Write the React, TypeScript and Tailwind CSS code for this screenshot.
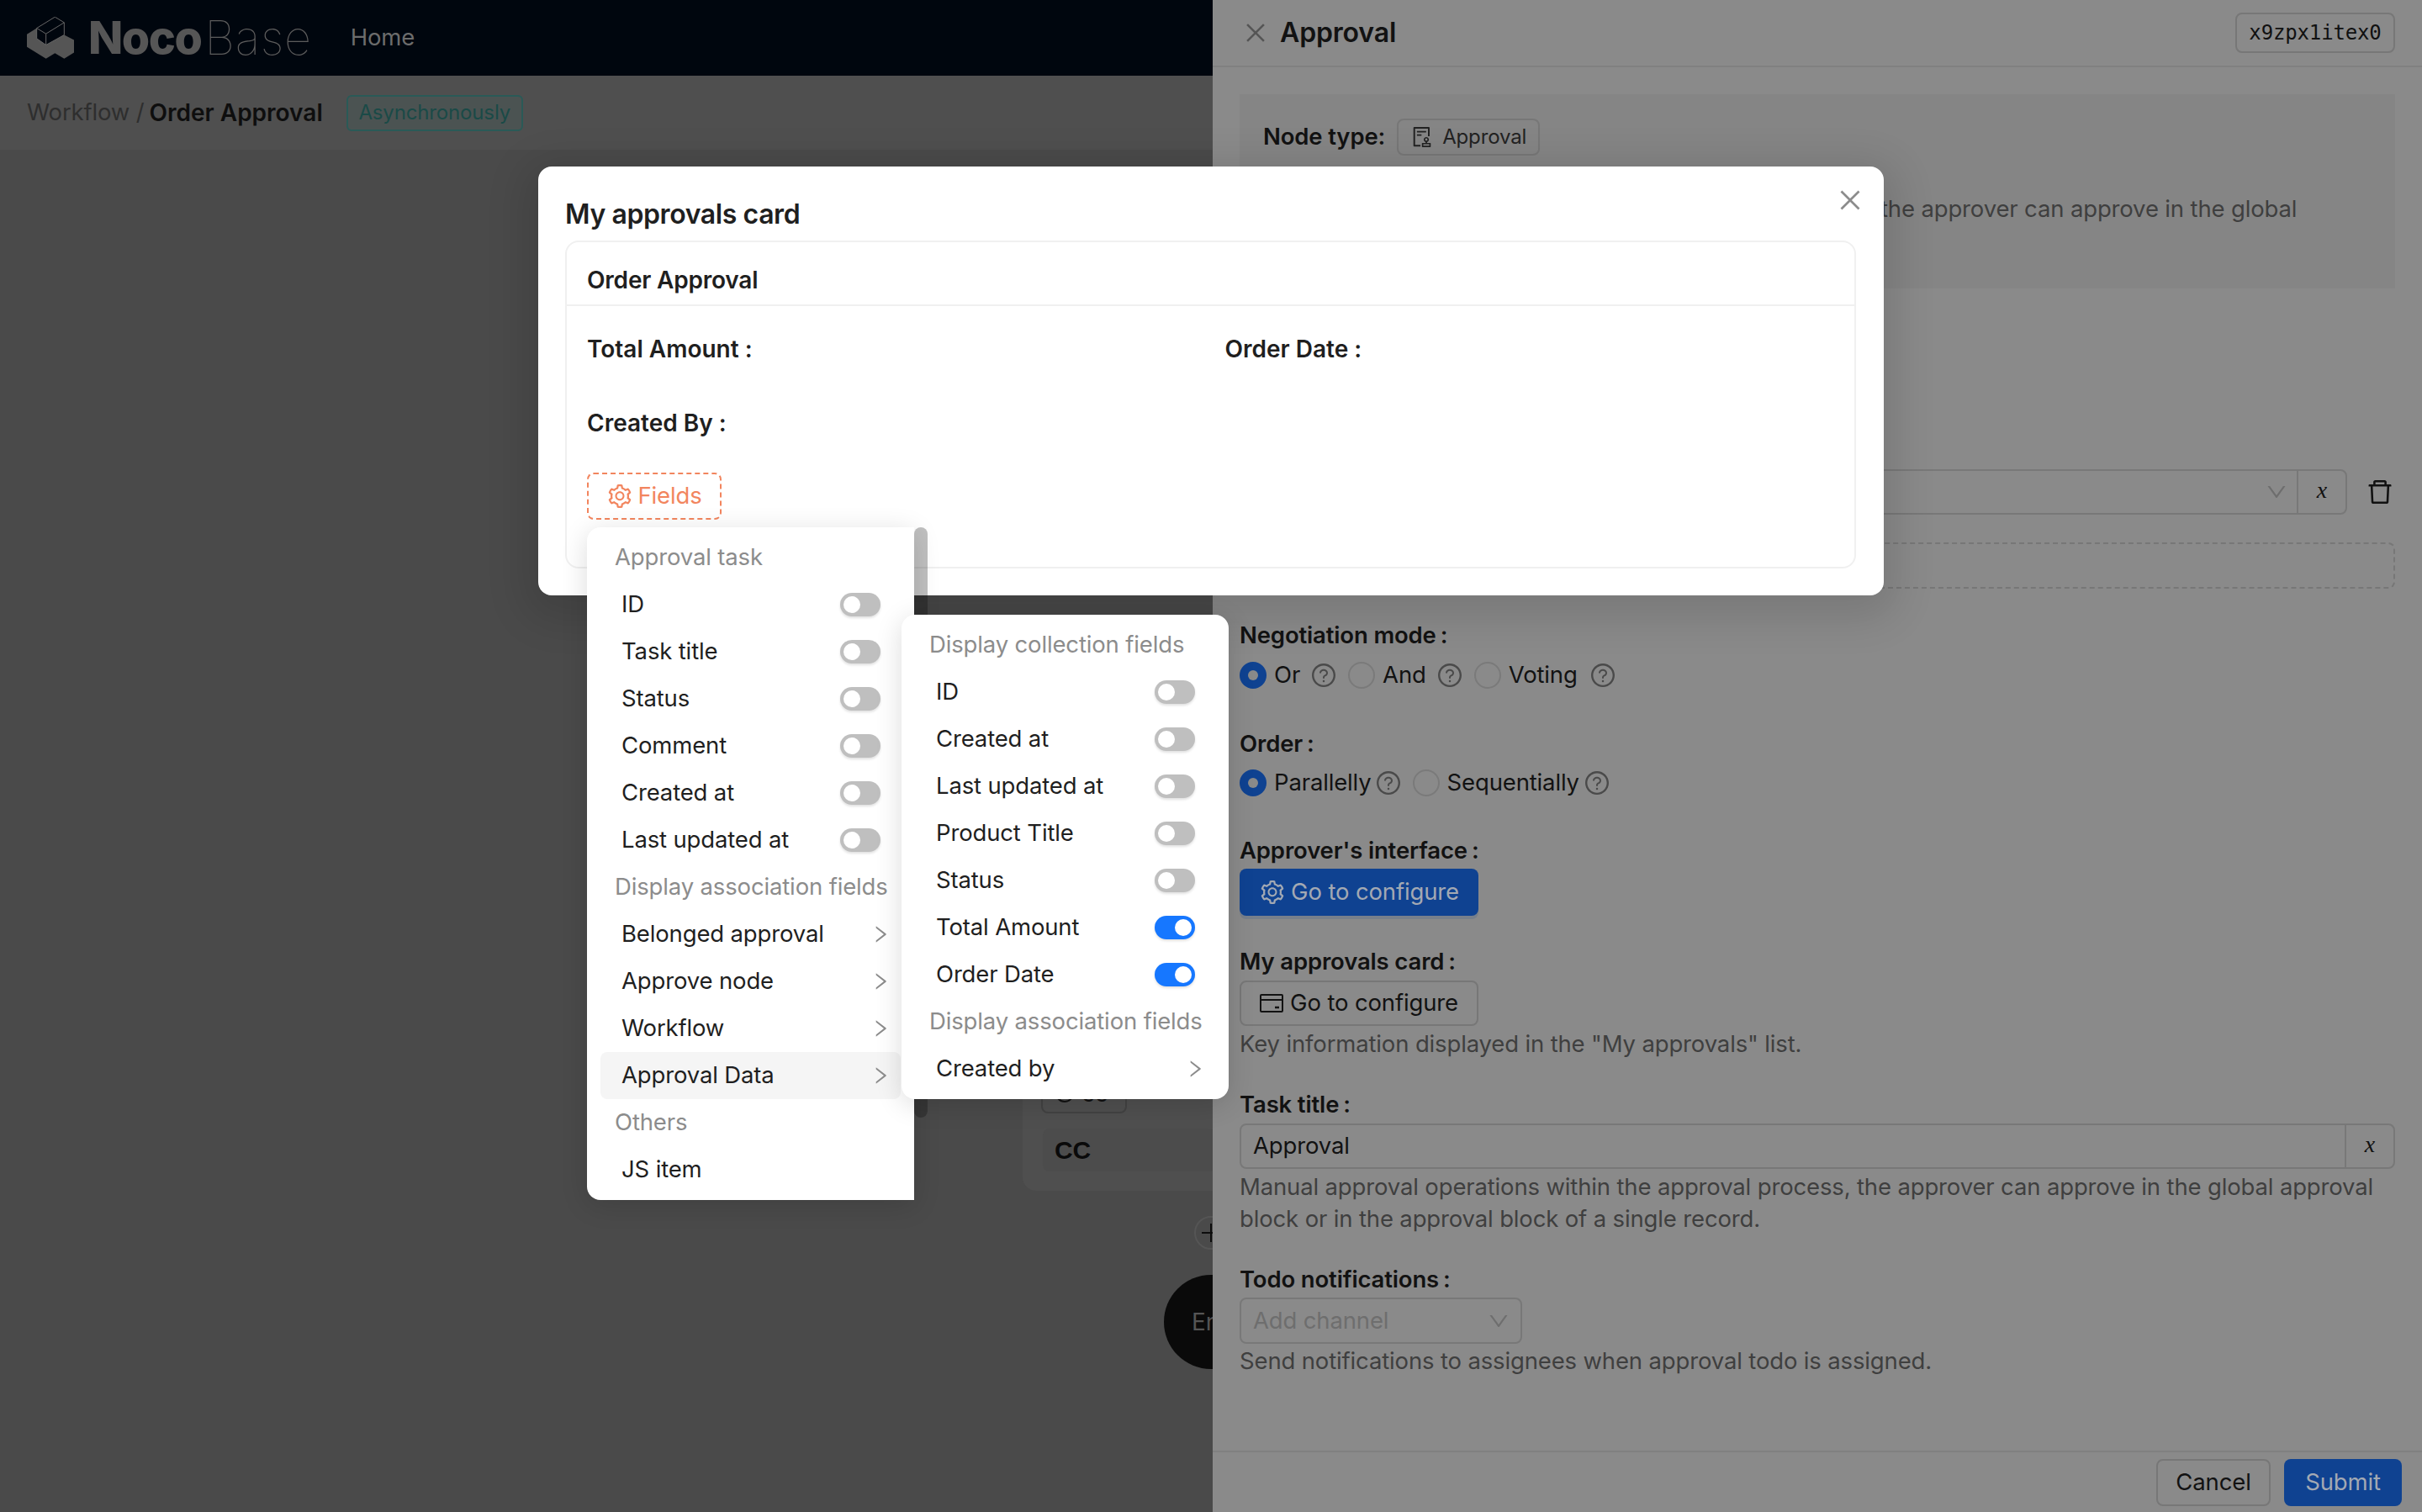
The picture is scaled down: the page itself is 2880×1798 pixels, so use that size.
import {
  AiOutlineAudit,
  AiOutlineClose,
  AiOutlineDelete,
  AiOutlineDown,
  AiOutlineQuestionCircle,
  AiOutlineRight,
  AiOutlineSetting,
} from "react-icons/ai";

type MenuRow =
  | { kind: "group"; label: string }
  | { kind: "switch"; label: string; on?: boolean }
  | { kind: "sub"; label: string; active?: boolean }
  | { kind: "item"; label: string };

const mainMenu: MenuRow[] = [
  { kind: "group", label: "Approval task" },
  { kind: "switch", label: "ID" },
  { kind: "switch", label: "Task title" },
  { kind: "switch", label: "Status" },
  { kind: "switch", label: "Comment" },
  { kind: "switch", label: "Created at" },
  { kind: "switch", label: "Last updated at" },
  { kind: "group", label: "Display association fields" },
  { kind: "sub", label: "Belonged approval" },
  { kind: "sub", label: "Approve node" },
  { kind: "sub", label: "Workflow" },
  { kind: "sub", label: "Approval Data", active: true },
  { kind: "group", label: "Others" },
  { kind: "item", label: "JS item" },
];

const subMenu: MenuRow[] = [
  { kind: "group", label: "Display collection fields" },
  { kind: "switch", label: "ID" },
  { kind: "switch", label: "Created at" },
  { kind: "switch", label: "Last updated at" },
  { kind: "switch", label: "Product Title" },
  { kind: "switch", label: "Status" },
  { kind: "switch", label: "Total Amount", on: true },
  { kind: "switch", label: "Order Date", on: true },
  { kind: "group", label: "Display association fields" },
  { kind: "sub", label: "Created by" },
];

function Toggle({ on }: { on?: boolean }) {
  return (
    <span
      className={`flex h-7 w-12 items-center rounded-full p-[4px] shadow-[0_2px_3px_rgba(0,0,0,0.12)] ${
        on ? "justify-end bg-[#1677ff]" : "justify-start bg-[#bfbfbf]"
      }`}
    >
      <span className="h-5 w-5 rounded-full bg-white" />
    </span>
  );
}

function Rows({ rows }: { rows: MenuRow[] }) {
  return (
    <>
      {rows.map((row) => {
        if (row.kind === "group") {
          return (
            <div key={row.label} className="flex h-14 items-center whitespace-nowrap pl-[17px] text-[27.5px] text-[#8c8c8c]">
              {row.label}
            </div>
          );
        }
        return (
          <div
            key={row.label}
            className={`flex h-14 items-center justify-between whitespace-nowrap rounded-lg pl-[25px] text-[27.5px] text-[#1f1f1f] ${
              row.kind === "sub" ? "pr-[11px]" : "pr-6"
            } ${row.kind === "sub" && row.active ? "bg-[#f5f5f5]" : ""}`}
          >
            <span>{row.label}</span>
            {row.kind === "switch" && <Toggle on={row.on} />}
            {row.kind === "sub" && <AiOutlineRight className="text-[26px] text-[#8c8c8c]" />}
          </div>
        );
      })}
    </>
  );
}

function Help({ className = "" }: { className?: string }) {
  return <AiOutlineQuestionCircle className={`shrink-0 text-[32px] text-[#4a4a4a] ${className}`} />;
}

function Radio({ on, className = "" }: { on?: boolean; className?: string }) {
  return on ? (
    <span className={`flex h-8 w-8 shrink-0 items-center justify-center rounded-full bg-[#0f4291] ${className}`}>
      <span className="h-3 w-3 rounded-full bg-[#8a8a8a]" />
    </span>
  ) : (
    <span className={`block h-8 w-8 shrink-0 rounded-full border-2 border-[#7a7a7a] ${className}`} />
  );
}

function FormLabel({ text, className = "" }: { text: string; className?: string }) {
  return (
    <div className={`h-[38px] text-[27.5px] font-semibold leading-[38px] text-[#121212] ${className}`}>
      {text}
      <span className="ml-[5px]">:</span>
    </div>
  );
}

function HelpText({ children, className = "" }: { children: React.ReactNode; className?: string }) {
  return <div className={`text-[27.5px] leading-[38px] text-[#3f3f3f] ${className}`}>{children}</div>;
}

function VarButton({ className = "" }: { className?: string }) {
  return (
    <span className={`flex w-[58px] shrink-0 items-center justify-center border-l-2 border-[#787878] pb-1 font-['Liberation_Serif',serif] text-[28px] italic text-[#111] ${className}`}>
      x
    </span>
  );
}

function LeftPage() {
  return (
    <div className="relative flex w-[1442px] shrink-0 flex-col overflow-hidden bg-[#4a4a4a]">
      <header className="flex h-[90px] shrink-0 items-center bg-[#00060e] pl-8">
        <svg width="56" height="50" viewBox="37 28 168 149" className="shrink-0">
          <path d="M37 90 L72 68 L72 105 L105 128 L170 92 L205 110 L205 155 L170 177 L137 157 L105 177 L37 135 Z" fill="#555555" />
          <path d="M72 68 L137 28 L170 48 L170 92 L105 128 L72 105 Z M72 68 L105 88 L170 48 M105 88 L105 128" fill="none" stroke="#666666" strokeWidth="3" />
        </svg>
        <span className="ml-[17px] text-[54px] font-extrabold leading-none tracking-[-1.5px] text-[#565656]">Noco</span>
        <span className="ml-[4px] text-[56px] font-thin leading-none tracking-[0.6px] text-[#5c5c5c]">Base</span>
        <span className="ml-[46px] text-[27.5px] text-[#6c6c6c]">Home</span>
      </header>
      <div className="flex h-[88px] shrink-0 items-center bg-[#4f4f4f] pl-8">
        <span className="text-[27.5px] text-[#2e2e2e]">Workflow /</span>
        <span className="ml-[6px] text-[28px] font-semibold tracking-normal text-[#0e0e0e]">Order Approval</span>
        <span className="ml-[28px] flex h-[43px] w-[210px] items-center justify-center rounded-md border-2 border-[#2a5a57] bg-[#4b5352] text-[24px] text-[#1a4a47]">
          Asynchronously
        </span>
      </div>
      {/* workflow canvas, seen mostly behind the dialog */}
      <div className="absolute left-[1216px] top-[1240px] h-[176px] w-[300px] rounded-2xl bg-[#4f4f4f]">
        <span className="absolute left-[22px] top-[35px] flex h-[49px] w-[102px] items-center gap-[8px] rounded-lg border-2 border-[#424242] pl-[14px] text-[28px] text-[#111]">
          <svg width="24" height="24" viewBox="0 0 24 24" className="shrink-0">
            <circle cx="12" cy="12" r="10" fill="none" stroke="#111" strokeWidth="2" />
            <circle cx="12" cy="12" r="4" fill="none" stroke="#111" strokeWidth="2" />
          </svg>
          cc
        </span>
        <span className="absolute left-[24px] top-[102px] flex h-[51px] w-[260px] items-center rounded-lg bg-[#4c4c4c] pl-[14px] font-['Liberation_Sans',sans-serif] text-[30px] font-bold text-[#0a0a0a]">
          CC
        </span>
      </div>
      <span className="absolute left-[1420px] top-[1446px] flex h-10 w-10 items-center justify-center rounded-full border-2 border-[#555] bg-[#4a4a4a]">
        <svg width="24" height="24" viewBox="0 0 24 24">
          <path d="M12 1 V23 M1 12 H23" stroke="#0d0d0d" strokeWidth="2" />
        </svg>
      </span>
      <span className="absolute left-[1384px] top-[1516px] flex h-[112px] w-[112px] items-center rounded-full bg-[#0a0a0a] pl-[33px] text-[28px] text-[#555]">
        End
      </span>
    </div>
  );
}

function Drawer() {
  return (
    <aside className="flex min-w-0 flex-1 flex-col bg-[#8a8a8a]">
      <div className="flex h-20 shrink-0 items-center justify-between border-b-2 border-[#808080] pl-[35px] pr-8">
        <div className="flex items-center gap-[13px]">
          <AiOutlineClose className="text-[32px] text-[#555]" />
          <span className="text-[32px] font-semibold text-[#121212]">Approval</span>
        </div>
        <span className="flex h-12 w-[190px] items-center justify-center rounded-lg border-2 border-[#777] font-['DejaVu_Sans_Mono',monospace] text-[24px] text-[#111]">
          x9zpx1itex0
        </span>
      </div>

      <div className="flex-1 px-8 pt-8">
        <div className="h-[231px] bg-[#858585] px-7 pt-[29px]">
          <div className="flex items-center gap-[14px]">
            <span className="text-[27.5px] font-semibold text-[#121212]">Node type:</span>
            <span className="flex h-[44px] w-[170px] items-center gap-[10px] rounded-lg border-2 border-[#777] pl-[14px] text-[24px] text-[#222]">
              <AiOutlineAudit className="text-[28px]" />
              Approval
            </span>
          </div>
          <p className="mt-[44px] text-[27.5px] leading-[38px] text-[#3f3f3f]">
            Manual approval operations within the approval process, the approver can approve in the global approval block or in the approval block of a single record.
          </p>
        </div>

        <div className="mt-[215px] flex h-[54px]">
          <div className="flex flex-1 rounded-lg border-2 border-[#787878]">
            <span className="flex flex-1 items-center justify-end pr-[10px] text-[#6e6e6e]">
              <AiOutlineDown className="text-[28px]" />
            </span>
            <VarButton />
          </div>
          <span className="flex w-[57px] items-center justify-end pr-0 text-[#111]">
            <AiOutlineDelete className="text-[36px]" />
          </span>
        </div>
        <div className="mt-[33px] h-[55px] rounded-lg border-2 border-dashed border-[#777]" />

        <FormLabel text="Negotiation mode" className="mt-9" />
        <div className="mt-[13px] flex h-8 items-center text-[27.5px] text-[#121212]">
          <Radio on />
          <span className="ml-[9px]">Or</span>
          <Help className="ml-[12px]" />
          <Radio className="ml-[13px]" />
          <span className="ml-[9px]">And</span>
          <Help className="ml-[12px]" />
          <Radio className="ml-[13px]" />
          <span className="ml-[9px]">Voting</span>
          <Help className="ml-[14px]" />
        </div>

        <FormLabel text="Order" className="mt-[46px]" />
        <div className="mt-[12px] flex h-8 items-center text-[27.5px] text-[#121212]">
          <Radio on />
          <span className="ml-[9px]">Parallelly</span>
          <Help className="ml-[4px]" />
          <Radio className="ml-[13px]" />
          <span className="ml-[9px]">Sequentially</span>
          <Help className="ml-[5px]" />
        </div>

        <FormLabel text="Approver's interface" className="mt-[45px]" />
        <button className="mt-[3px] flex h-14 w-[284px] items-center justify-center gap-[6px] rounded-lg bg-[#0f4291] text-[27.5px] text-[#a3a9b3] shadow-[0_4px_0_rgba(15,66,145,0.15)]">
          <AiOutlineSetting className="text-[32px]" />
          Go to configure
        </button>

        <FormLabel text="My approvals card" className="mt-[35px]" />
        <button className="mt-1 flex h-[54px] w-[284px] items-center justify-center gap-[8px] rounded-lg border-2 border-[#777] text-[27.5px] text-[#121212]">
          <svg width="28" height="22" viewBox="0 0 28 22" className="shrink-0">
            <rect x="1" y="1" width="26" height="20" rx="1" fill="none" stroke="#121212" strokeWidth="2" />
            <path d="M1 7 H27" stroke="#121212" strokeWidth="2" />
            <path d="M18 16 H23" stroke="#121212" strokeWidth="2.5" />
          </svg>
          Go to configure
        </button>
        <HelpText className="mt-[2px]">Key information displayed in the "My approvals" list.</HelpText>

        <FormLabel text="Task title" className="mt-[34px]" />
        <div className="mt-1 flex h-[54px] rounded-lg border-2 border-[#787878]">
          <span className="flex flex-1 items-center pl-[14px] text-[27.5px] text-[#121212]">Approval</span>
          <VarButton />
        </div>
        <HelpText className="mt-[2px]">
          Manual approval operations within the approval process, the approver can approve in the global approval block or in the approval block of a single record.
        </HelpText>

        <FormLabel text="Todo notifications" className="mt-[34px]" />
        <div className="mt-[3px] flex h-[55px] w-[336px] items-center justify-between rounded-lg border-2 border-[#787878] pl-[14px] pr-[12px] text-[27.5px] text-[#6e6e6e]">
          Add channel
          <AiOutlineDown className="text-[28px]" />
        </div>
        <HelpText className="mt-[1px]">Send notifications to assignees when approval todo is assigned.</HelpText>
      </div>

      <div className="flex h-[73px] shrink-0 justify-end gap-4 border-t-2 border-[#808080] pr-6 pt-2">
        <button className="h-14 w-[136px] rounded-lg border-2 border-[#777] text-[27.5px] text-[#121212]">Cancel</button>
        <button className="h-14 w-[140px] rounded-lg bg-[#0f4291] text-[27.5px] text-[#a3a9b3]">Submit</button>
      </div>
    </aside>
  );
}

function CardDialog() {
  return (
    <div className="absolute left-[640px] top-[198px] h-[510px] w-[1600px] rounded-2xl bg-white pl-8 pr-[33px] pt-10 shadow-[0_12px_48px_16px_rgba(0,0,0,0.12)]">
      <AiOutlineClose className="absolute right-[23px] top-[23px] text-[34px] text-[#8c8c8c]" />
      <h2 className="text-[32px] font-semibold leading-[34px] tracking-[-0.4px] text-[#1f1f1f]">My approvals card</h2>
      <div className="mt-[14px] h-[390px] rounded-2xl border-2 border-[#f0f0f0]">
        <div className="flex h-[76px] items-center border-b-2 border-[#f0f0f0] pl-6 pt-4 text-[28px] font-semibold tracking-[-0.2px] text-[#1f1f1f]">
          Order Approval
        </div>
        <div className="grid grid-cols-2 gap-y-[50px] pl-6 pt-[32px] text-[28px] font-semibold leading-[38px] tracking-normal text-[#1f1f1f]">
          <span>Total Amount :</span>
          <span className="pl-[5px]">Order Date :</span>
          <span>Created By :</span>
        </div>
        <div className="ml-6 mt-[40px] flex h-[56px] w-[160px] items-center justify-center gap-[5px] rounded-lg border-2 border-dashed border-[#f2855e] text-[27.5px] text-[#f2855e]">
          <AiOutlineSetting className="text-[32px]" />
          Fields
        </div>
      </div>
    </div>
  );
}

function FieldsMenus() {
  return (
    <>
      <div className="absolute left-[698px] top-[627px] flex">
        <div className="w-[389px] rounded-l-2xl bg-white px-4 py-2 shadow-[0_6px_32px_rgba(0,0,0,0.14)]">
          <Rows rows={mainMenu} />
        </div>
        <div className="h-[702px] w-4 rounded-lg bg-black/25" />
      </div>
      <div className="absolute left-[1072px] top-[731px] w-[389px] rounded-2xl bg-white px-4 py-2 shadow-[0_6px_32px_rgba(0,0,0,0.14)]">
        <Rows rows={subMenu} />
      </div>
    </>
  );
}

export default function App() {
  return (
    <div className="relative flex h-[1798px] w-[2880px] overflow-hidden font-['Inter','Noto_Sans',sans-serif] tracking-[-0.15px]">
      <LeftPage />
      <Drawer />
      <CardDialog />
      <FieldsMenus />
    </div>
  );
}
